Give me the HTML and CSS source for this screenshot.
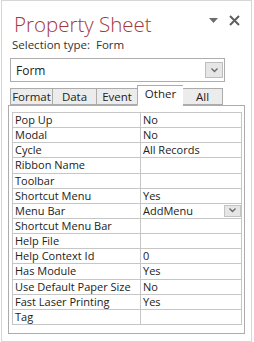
FILE: index.html
```html
<!DOCTYPE html>
<html lang="en">

<head>
    <meta charset="UTF-8" />
    <title>Property Sheet</title>
    <link rel="stylesheet" href="styles.css">
</head>

<body>
    <div class="pane">
        <div class="pane-head">
            <h1>Property Sheet</h1>
            <div class="pane-tools">
                <svg class="menu-arrow" width="9" height="5" viewBox="0 0 9 5"><path d="M0 0h9L4.5 5z" fill="#6d6d6d"/></svg>
                <svg class="close" width="11" height="11" viewBox="0 0 11 11"><path d="M1 1l9 9M10 1l-9 9" stroke="#5f5f5f" stroke-width="2"/></svg>
            </div>
        </div>

        <div class="sel-type">Selection type:&nbsp; Form</div>

        <div class="combo">
            <span>Form</span>
            <span class="drop-btn">
                <svg width="7" height="5" viewBox="0 0 7 5"><path d="M0.5 0.5l3 3 3-3" fill="none" stroke="#6a6a6a" stroke-width="1.4"/></svg>
            </span>
        </div>

        <div class="tabs">
            <div class="tab tab-format">Format</div>
            <div class="tab tab-data">Data</div>
            <div class="tab tab-event">Event</div>
            <div class="tab tab-other active">Other</div>
            <div class="tab tab-all">All</div>
        </div>

        <div class="tab-panel">
            <table class="props">
                <tr><td>Pop Up</td><td>No</td></tr>
                <tr><td>Modal</td><td>No</td></tr>
                <tr><td>Cycle</td><td>All Records</td></tr>
                <tr><td>Ribbon Name</td><td></td></tr>
                <tr><td>Toolbar</td><td></td></tr>
                <tr><td>Shortcut Menu</td><td>Yes</td></tr>
                <tr>
                    <td>Menu Bar</td>
                    <td class="with-drop">AddMenu
                        <span class="cell-drop">
                            <svg width="7" height="5" viewBox="0 0 7 5"><path d="M0.5 0.5l3 3 3-3" fill="none" stroke="#6a6a6a" stroke-width="1.4"/></svg>
                        </span>
                    </td>
                </tr>
                <tr><td>Shortcut Menu Bar</td><td></td></tr>
                <tr><td>Help File</td><td></td></tr>
                <tr><td>Help Context Id</td><td>0</td></tr>
                <tr><td>Has Module</td><td>Yes</td></tr>
                <tr><td>Use Default Paper Size</td><td>No</td></tr>
                <tr><td>Fast Laser Printing</td><td>Yes</td></tr>
                <tr><td>Tag</td><td></td></tr>
            </table>
        </div>
    </div>
</body>

</html>
```

FILE: styles.css
```css
body {
    margin: 0;
    padding: 0;
    background: #ffffff;
    font-family: "Open Sans", "Noto Sans", sans-serif;
    font-size: 11px;
    color: #222;
}

.pane {
    box-sizing: border-box;
    width: 251px;
    height: 342px;
    margin-left: 1px;
    border: 1px solid #d6d6d6;
    padding: 0 6px 0 6px;
    background: #fff;
}

.pane-head {
    display: flex;
    align-items: flex-start;
    justify-content: space-between;
    height: 36px;
}

.pane-head h1 {
    margin: 11px 0 0 6px;
    font-family: "Open Sans", sans-serif;
    font-weight: 300;
    font-size: 20.5px;
    line-height: 25px;
    color: #a4373a;
}

.pane-tools {
    display: flex;
    align-items: center;
    gap: 11px;
    margin-top: 14px;
    margin-right: 5px;
}

.sel-type {
    margin-left: 4px;
    height: 21px;
    line-height: 16px;
    font-size: 11.5px;
    color: #333;
}

/* combo box with form name */
.combo {
    box-sizing: border-box;
    display: flex;
    align-items: center;
    justify-content: space-between;
    width: 215px;
    height: 24px;
    margin-left: 2px;
    padding: 0 1px 0 5px;
    border: 1px solid #adadad;
    font-size: 12px;
}

.drop-btn {
    box-sizing: border-box;
    display: flex;
    align-items: center;
    justify-content: center;
    width: 18px;
    height: 16px;
    background: #e6e6e6;
    border: 1px solid #bdbdbd;
}

.tabs {
    display: flex;
    align-items: flex-end;
    height: 23px;
    margin-left: 2px;
    position: relative;
    z-index: 1;
}

.tab {
    box-sizing: border-box;
    height: 17px;
    border: 1px solid #acacac;
    border-right: none;
    background: #ececec;
    text-align: center;
    line-height: 15px;
    font-size: 11.5px;
}

.tab-format { width: 42px; }
.tab-data { width: 44px; }
.tab-event { width: 41px; }
.tab-other { width: 46px; }
.tab-all { width: 40px; border-right: 1px solid #acacac; }

.tab.active {
    height: 21px;
    background: #fff;
    border-bottom: 1px solid #fff;
    line-height: 16px;
    margin-bottom: -1px;
}

.tab.active + .tab {
    border-left: none;
}

.tab-panel {
    box-sizing: border-box;
    width: 237px;
    height: 229px;
    border: 1px solid #acacac;
    padding: 6px 3px 0 3px;
}

.props {
    width: 230px;
    border-collapse: collapse;
    table-layout: fixed;
}

.props td {
    border: 1px solid #c6c6c6;
    height: 14.15px;
    padding: 0 0 0 2px;
    line-height: 14px;
    white-space: nowrap;
    overflow: hidden;
}

.props td:first-child {
    width: 125px;
}

.with-drop {
    position: relative;
}

.cell-drop {
    position: absolute;
    right: 0;
    top: 1px;
    box-sizing: border-box;
    display: flex;
    align-items: center;
    justify-content: center;
    width: 17px;
    height: 12px;
    background: #e6e6e6;
    border: 1px solid #c4c4c4;
}
```
